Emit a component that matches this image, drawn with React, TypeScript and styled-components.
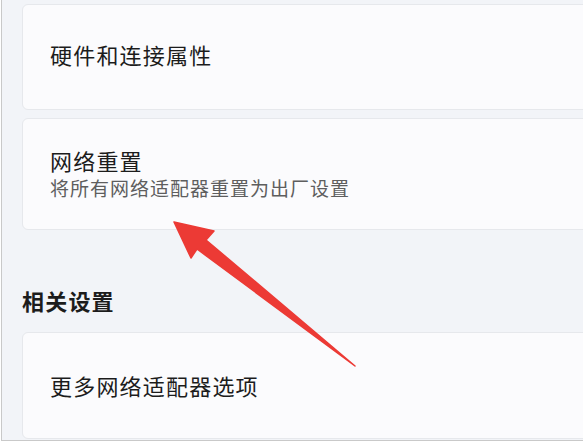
import React from "react";
import styled, { createGlobalStyle } from "styled-components";

const Global = createGlobalStyle`
  html, body { margin: 0; padding: 0; background: #ffffff; }
  body { font-family: "Noto Sans CJK SC", "Noto Sans", sans-serif; }
`;

const Frame = styled.div`
  position: relative;
  width: 582px;
  height: 441px;
  margin-left: 1px;
  box-sizing: border-box;
  border-left: 1px solid #c9c9c9;
  border-bottom: 1px solid #c9c9c9;
  background: #f2f4f8;
  overflow: hidden;
  padding: 4px 0 0 20px;
  display: flex;
  flex-direction: column;
`;

const Card = styled.div<{ $h: number; $mt?: number; $pb?: number }>`
  height: ${(p) => p.$h}px;
  margin-top: ${(p) => p.$mt ?? 0}px;
  padding-bottom: ${(p) => p.$pb ?? 0}px;
  margin-right: -12px;
  box-sizing: border-box;
  background: #fbfbfd;
  border: 1px solid #e6e8ec;
  border-radius: 6px;
  padding-left: 27px;
  display: flex;
  flex-direction: column;
  justify-content: center;
  flex-shrink: 0;
`;

const Title = styled.div`
  font-size: 22px;
  line-height: 28px;
  color: #1c1c1c;
  letter-spacing: 1.2px;
`;

const Sub = styled.div`
  font-size: 19px;
  line-height: 27px;
  color: #5e5e5e;
  letter-spacing: 1px;
`;

const Heading = styled.div`
  height: 102px;
  display: flex;
  align-items: center;
  padding-top: 38px;
  box-sizing: border-box;
  font-size: 22px;
  font-weight: 600;
  color: #1c1c1c;
  letter-spacing: 1.2px;
  flex-shrink: 0;
`;

const ArrowLayer = styled.svg`
  position: absolute;
  left: 0;
  top: 0;
  width: 582px;
  height: 441px;
  pointer-events: none;
`;

export default function App() {
  return (
    <>
      <Global />
      <Frame>
        <Card $h={106} $pb={6}>
          <Title>硬件和连接属性</Title>
        </Card>
        <Card $h={112} $mt={8} $pb={2}>
          <Title>网络重置</Title>
          <Sub>将所有网络适配器重置为出厂设置</Sub>
        </Card>
        <Heading>相关设置</Heading>
        <Card $h={107} $pb={2}>
          <Title>更多网络适配器选项</Title>
        </Card>
        <ArrowLayer viewBox="1 0 582 441">
          <polygon
            points="173,222 213,231 205,240 354,366 196,249 190,258"
            fill="#ec3a35"
            stroke="#ec3a35"
            strokeWidth="1.5"
            strokeLinejoin="round"
          />
        </ArrowLayer>
      </Frame>
    </>
  );
}
